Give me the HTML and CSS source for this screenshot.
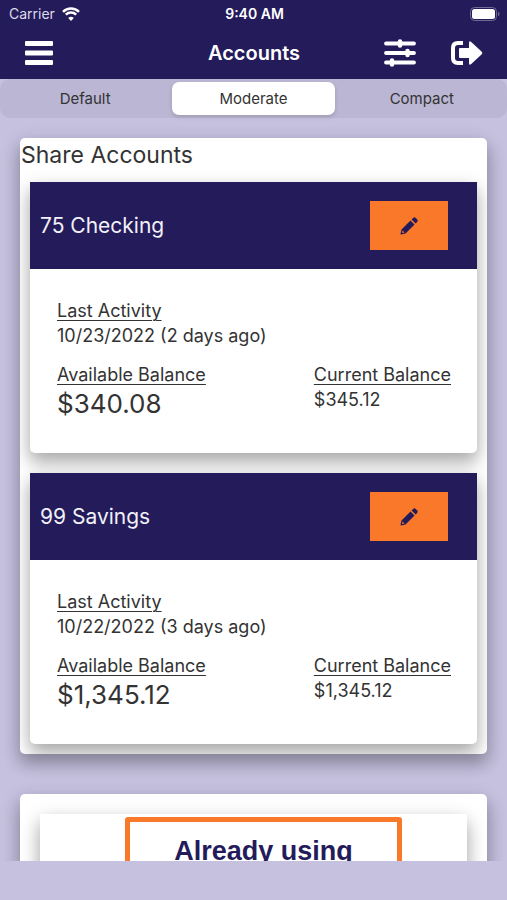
FILE: index.html
```html
<!DOCTYPE html>
<html lang="en">
<head>
<meta charset="utf-8">
<meta name="viewport" content="width=device-width, initial-scale=1">
<title>Accounts</title>
<link rel="stylesheet" href="styles.css">
</head>
<body>
<header class="top">
  <div class="status">
    <div class="carrier">
      <span>Carrier</span>
      <svg class="wifi" viewBox="0 0 18 14" aria-hidden="true">
        <path d="M9 14 6.2 11.1a4 4 0 0 1 5.6 0z" fill="#fff"/>
        <path d="M3.800 8.500a7.400 7.400 0 0 1 10.400 0M1 5.600a11.300 11.300 0 0 1 16 0" transform="translate(0 -.8)" fill="none" stroke="#fff" stroke-width="2.400"/>
      </svg>
    </div>
    <time class="clock">9:40 AM</time>
    <div class="power">
      <svg class="battery" viewBox="0 0 30 14" aria-hidden="true">
        <rect x=".5" y=".5" width="26" height="13" rx="4" fill="none" stroke="#6f6b94"/>
        <rect x="2" y="2" width="23" height="10" rx="2.500" fill="#fff"/>
        <path d="M28 4.800c2 .7 2 3.700 0 4.400z" fill="#6f6b94"/>
      </svg>
    </div>
  </div>
  <nav class="bar">
    <button class="icon-button" type="button" aria-label="Menu">
      <svg class="menu-icon" viewBox="0 0 28 24" aria-hidden="true">
        <path d="M1 0h26q1 0 1 1v3q0 1-1 1H1q-1 0-1-1V1q0-1 1-1zM1 9.500h26q1 0 1 1v3q0 1-1 1H1q-1 0-1-1v-3q0-1 1-1zM1 19h26q1 0 1 1v3q0 1-1 1H1q-1 0-1-1v-3q0-1 1-1z" fill="#fff"/>
      </svg>
    </button>
    <h1 class="title">Accounts</h1>
    <div class="actions">
      <button class="icon-button" type="button" aria-label="Filters">
        <svg class="sliders-icon" viewBox="0 0 32 28" aria-hidden="true">
          <path d="M2 4.500h28M2 14h28M2 23.500h28" stroke="#fff" stroke-width="3.800" stroke-linecap="round"/>
          <path d="M16 2.500v4M23.500 12v4M8 21.500v4" stroke="#fff" stroke-width="4.500" stroke-linecap="round"/>
        </svg>
      </button>
      <button class="icon-button" type="button" aria-label="Sign out">
        <svg class="exit-icon" viewBox="0 0 32 24" aria-hidden="true">
          <path d="M12 2H7Q2 2 2 7v10q0 5 5 5h5" fill="none" stroke="#fff" stroke-width="4" stroke-linejoin="round"/>
          <path d="M9 7h9V2q0-3 2.500-.8l10 9.400q1.500 1.400 0 2.800l-10 9.400Q18 25 18 22v-5H9q-1 0-1-1V8q0-1 1-1z" fill="#fff"/>
        </svg>
      </button>
    </div>
  </nav>
</header>
<fieldset class="segments" aria-label="Density">
  <label class="segment"><input type="radio" name="density"><span>Default</span></label>
  <label class="segment"><input type="radio" name="density" checked><span>Moderate</span></label>
  <label class="segment"><input type="radio" name="density"><span>Compact</span></label>
</fieldset>
<main class="content">
  <section class="panel">
    <h2 class="panel-title">Share Accounts</h2>
    <article class="account">
      <div class="account-head">
        <h3>75 Checking</h3>
        <button class="edit" type="button" aria-label="Edit 75 Checking">
          <svg viewBox="0 0 18 18" aria-hidden="true">
            <path d="M10.500 3.500l4 4L5.500 16.500l-4.500 1q-.6 0-.5-.6l1-4.400zM11.600 2.400l1.500-1.500q1.300-1.200 2.600 0l1.400 1.400q1.200 1.300 0 2.600l-1.500 1.500z" fill="#241b5b"/>
            <path d="M2.500 13.500l2 2-1.800.5-.7-.7z" fill="#f97829"/>
          </svg>
        </button>
      </div>
      <dl class="facts">
        <div class="wide"><dt>Last Activity</dt><dd>10/23/2022 (2 days ago)</dd></div>
        <div><dt>Available Balance</dt><dd class="amount">$340.08</dd></div>
        <div><dt>Current Balance</dt><dd>$345.12</dd></div>
      </dl>
    </article>
    <article class="account">
      <div class="account-head">
        <h3>99 Savings</h3>
        <button class="edit" type="button" aria-label="Edit 99 Savings">
          <svg viewBox="0 0 18 18" aria-hidden="true">
            <path d="M10.500 3.500l4 4L5.500 16.500l-4.500 1q-.6 0-.5-.6l1-4.400zM11.600 2.400l1.500-1.500q1.300-1.200 2.600 0l1.400 1.400q1.200 1.300 0 2.600l-1.500 1.500z" fill="#241b5b"/>
            <path d="M2.500 13.500l2 2-1.800.5-.7-.7z" fill="#f97829"/>
          </svg>
        </button>
      </div>
      <dl class="facts">
        <div class="wide"><dt>Last Activity</dt><dd>10/22/2022 (3 days ago)</dd></div>
        <div><dt>Available Balance</dt><dd class="amount">$1,345.12</dd></div>
        <div><dt>Current Balance</dt><dd>$1,345.12</dd></div>
      </dl>
    </article>
  </section>
  <section class="panel promo">
    <div class="promo-card">
      <a class="promo-link" href="#">Already using</a>
    </div>
  </section>
</main>
</body>
</html>
```
FILE: styles.css
```css
:root {
  --navy: #241b5b;
  --orange: #f97829;
  --lavender: #c5c1df;
  --ink: #333;
  --shadow: 0 10px 16px rgba(0, 0, 0, .2), 0 6px 20px rgba(0, 0, 0, .19);
}
* { box-sizing: border-box; }
body {
  margin: 0;
  height: 100vh;
  padding-bottom: 39px;
  display: flex;
  flex-direction: column;
  background: var(--lavender);
  color: var(--ink);
  font-family: Inter, "Liberation Sans", sans-serif;
}
h1, h2, h3, dl, dd { margin: 0; font-weight: 400; }
button { border: 0; padding: 0; background: none; display: flex; }
svg { display: block; }

.top { background: var(--navy); color: #fff; }
.status, .bar {
  display: grid;
  grid-template-columns: 1fr auto 1fr;
  align-items: center;
}
.status { height: 27px; padding: 0 7px 0 9px; font-size: 14px; }
.carrier { display: flex; align-items: center; gap: 7px; color: #dddbe8; }
.clock { font-weight: 600; }
.power { justify-self: end; }
.wifi { width: 18px; height: 14px; }
.battery { width: 30px; height: 14px; }
.bar { height: 52px; padding: 0 24px 0 25px; }
.title { font-size: 20px; font-weight: 600; }
.actions { justify-self: end; display: flex; align-items: center; gap: 35px; }
.menu-icon { width: 28px; height: 24px; }
.sliders-icon { width: 32px; height: 28px; }
.exit-icon { width: 32px; height: 24px; }

.segments {
  margin: 0;
  border: 0;
  padding: 3px 4px;
  display: grid;
  grid-template-columns: repeat(3, 1fr);
  gap: 6px;
  border-radius: 10px;
  background: #bab6d3;
}
.segment { cursor: pointer; }
.segment input { position: absolute; opacity: 0; }
.segment span {
  display: block;
  border-radius: 7px;
  font-size: 15px;
  line-height: 33px;
  text-align: center;
}
.segment input:checked + span { background: #fff; box-shadow: 0 2px 4px rgba(0, 0, 0, .15); }

.content { flex: 1; min-height: 0; overflow: hidden; padding: 20px 20px 0; }
.panel {
  overflow: hidden;
  margin-bottom: 40px;
  border-radius: 5px;
  background: #fff;
  box-shadow: var(--shadow);
}
.panel-title { padding-left: 1px; font-size: 23px; line-height: 34px; }
.account {
  margin: 10px 10px 20px;
  border-radius: 0 0 5px 5px;
  background: #fff;
  box-shadow: var(--shadow);
}
.account:last-child { margin-bottom: 10px; }
.account-head {
  display: flex;
  align-items: center;
  justify-content: space-between;
  padding: 19px 29px 19px 10px;
  background: var(--navy);
  color: #f2f1f8;
}
.account-head h3 { font-size: 21px; }
.edit {
  width: 78px;
  height: 49px;
  align-items: center;
  justify-content: center;
  background: var(--orange);
}
.edit svg { width: 18px; height: 18px; }
.facts {
  display: grid;
  grid-template-columns: 1fr auto;
  row-gap: 14px;
  padding: 29px 26px 32px 27px;
  font-size: 18px;
  line-height: 25px;
}
.wide { grid-column: 1 / -1; }
dt { text-decoration: underline 1px; text-underline-offset: 3px; }
.amount { font-size: 26px; line-height: 34px; }

.promo { padding: 20px; }
.promo-card {
  display: flex;
  justify-content: center;
  padding: 3px 0 20px 20px;
  background: #fff;
  box-shadow: var(--shadow);
}
.promo-link {
  width: 68%;
  border: 5px solid var(--orange);
  border-radius: 3px;
  padding: 11px 0;
  color: var(--navy);
  font: bold 27px/36px "Liberation Sans", sans-serif;
  text-align: center;
  text-decoration: none;
}
```
